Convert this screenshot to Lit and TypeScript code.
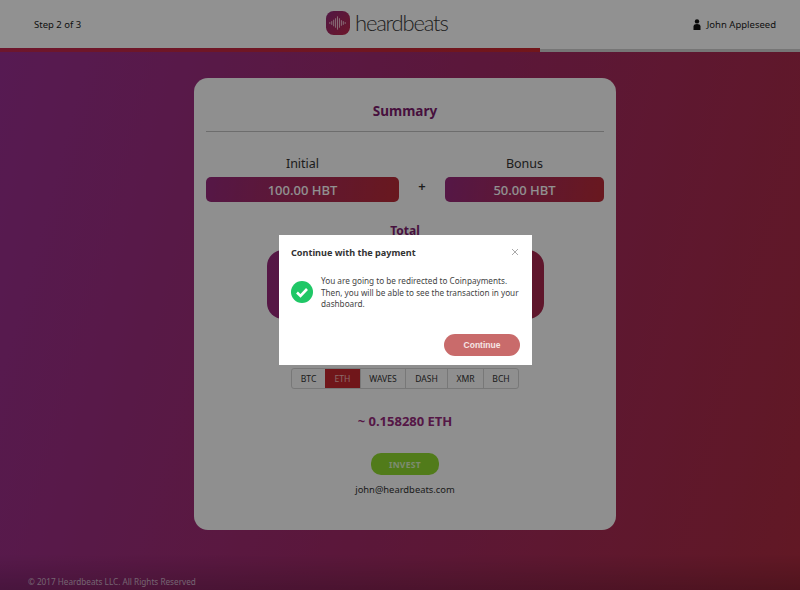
import { LitElement, html, css } from "lit";
import { customElement } from "lit/decorators.js";

const COINS = [
  { name: "BTC", w: 33 },
  { name: "ETH", w: 35 },
  { name: "WAVES", w: 45 },
  { name: "DASH", w: 42 },
  { name: "XMR", w: 36 },
  { name: "BCH", w: 35 },
];

@customElement("app-root")
export class AppRoot extends LitElement {
  static styles = css`
    :host {
      display: block;
      width: 800px;
      height: 590px;
      overflow: hidden;
      position: relative;
      font-family: "Noto Sans", "Open Sans", sans-serif;
      color: #222;
    }
    .page {
      height: 590px;
      display: flex;
      flex-direction: column;
      background: linear-gradient(105deg, #982f92 0%, #a02a68 50%, #ac2b40 100%);
    }
    .top {
      height: 48px;
      flex: none;
      background: #fff;
      display: flex;
      align-items: center;
      padding: 0 24px 0 34px;
      font-size: 9.5px;
    }
    .step { width: 292px; flex: none; }
    .logo { display: flex; align-items: center; gap: 5px; margin-top: -2px; }
    .logo-text { font-size: 22px; letter-spacing: -1.2px; color: #3a3a3a; font-family: "Lato", sans-serif; font-weight: 300; line-height: 24px; }
    .user { display: flex; align-items: center; gap: 6px; margin-left: auto; }
    .progress { height: 4px; flex: none; display: flex; background: #fff; }
    .progress i { display: block; height: 4px; width: 540px; background: linear-gradient(90deg, #c0284f, #c8282f); }
    .progress b { display: block; height: 3px; flex: 1; margin-top: 1px; background: #d0d0d0; }
    .main { flex: 1; display: flex; flex-direction: column; padding-top: 26px; }
    .card {
      margin-left: 194px;
      width: 422px;
      height: 452px;
      box-sizing: border-box;
      background: #fbfbfb;
      border-radius: 14px;
      padding: 23px 12px 0;
      display: flex;
      flex-direction: column;
      align-items: center;
    }
    .title { font-size: 13.5px; line-height: 20px; font-weight: 700; color: #7e1d6e; }
    .rule { align-self: stretch; height: 1px; background: #c0c0c0; margin-top: 10px; }
    .amounts { align-self: stretch; display: grid; grid-template-columns: 193px 46px 159px; margin-top: 23px; }
    .col { display: flex; flex-direction: column; align-items: center; }
    .col span { font-size: 12.5px; line-height: 18px; margin-bottom: 4px; color: #333; }
    .pill {
      align-self: stretch;
      height: 25px;
      border-radius: 5px;
      display: flex;
      align-items: center;
      justify-content: center;
      color: #fff;
      font-size: 13px;
      font-weight: 500;
      background: linear-gradient(100deg, #962a7c, #b92b36);
    }
    .plus { text-align: center; padding-top: 22px; font-size: 13px; line-height: 18px; font-weight: 600; color: #333; }
    .total-label { font-size: 12px; line-height: 16px; font-weight: 700; color: #7e1d6e; margin-top: 21px; }
    .total { width: 277px; height: 69px; margin-top: 11px; border-radius: 16px; background: linear-gradient(100deg, #962a7c, #a8284c); }
    .coins { display: flex; margin-top: 49px; height: 21px; border: 1px solid #d4d4d4; border-radius: 3px; box-sizing: border-box; }
    .coin { display: flex; align-items: center; justify-content: center; box-sizing: border-box; font-size: 8.6px; color: #333; border-left: 1px solid #d4d4d4; }
    .coin:first-child { border-left: 0; }
    .coin.on { background: #c5282f; color: #f3b9b9; border-left: 0; }
    .eth { margin-top: 23px; font-size: 13px; line-height: 18px; font-weight: 700; color: #962a7c; }
    .invest { margin-top: 23px; width: 68px; height: 22px; border-radius: 10px; background: #8fd82f; color: #dcf5c4; font-size: 8.5px; font-weight: 700; display: flex; align-items: center; justify-content: center; letter-spacing: .3px; }
    .mail { margin-top: 7px; font-size: 9.4px; line-height: 16px; color: #333; }
    .foot {
      margin-top: auto;
      height: 36px;
      box-sizing: border-box;
      padding: 22px 0 0 28px;
      font-size: 8.2px;
      line-height: 12px;
      color: #cdb0c6;
      background: linear-gradient(180deg, rgba(0, 0, 0, 0), rgba(0, 0, 0, 0.18));
    }
    .shade { position: absolute; inset: 0; background: rgba(0, 0, 0, 0.43); }
    .modal {
      position: absolute;
      left: 279px;
      top: 235px;
      width: 253px;
      height: 130px;
      background: #fff;
      box-sizing: border-box;
      padding: 10px 12px 0 12px;
      display: flex;
      flex-direction: column;
    }
    .m-head { display: flex; justify-content: space-between; align-items: flex-start; }
    .m-title { font-size: 9.1px; line-height: 15px; font-weight: 700; color: #333; }
    .close { margin: 3px 1px 0 0; }
    .m-body { display: flex; align-items: center; gap: 8px; margin-top: 15px; }
    .m-body p { margin: 0; font-size: 8.2px; line-height: 11.5px; color: #444; width: 200px; flex: none; }
    .m-foot { display: flex; justify-content: flex-end; margin-top: auto; padding-bottom: 9px; }
    .go { width: 76px; height: 22px; border-radius: 11px; background: #c96b6b; color: #f6e6e6; font-size: 8.5px; font-weight: 700; display: flex; align-items: center; justify-content: center; font-family: "Liberation Sans", sans-serif; }
    svg { display: block; flex: none; }
  `;

  render() {
    return html`
      <div class="page">
        <div class="top">
          <div class="step">Step 2 of 3</div>
          <div class="logo">
            <svg width="24" height="24" viewBox="0 0 25 25">
              <defs><linearGradient id="lg" x1="0" y1="0" x2="1" y2="1"><stop offset="0" stop-color="#8e2a78"/><stop offset="1" stop-color="#c0284a"/></linearGradient></defs>
              <rect width="25" height="25" rx="8" fill="url(#lg)"/>
              <path d="M4 12v1M6 11v3M8 9.5v6M10 8v9M12 6v13M14 8v9M16 10v5M18 11v3M20 12v1" stroke="#f4c9d6" stroke-width="1" stroke-linecap="round"/>
            </svg>
            <span class="logo-text">heardbeats</span>
          </div>
          <div class="user">
            <svg width="8" height="11" viewBox="0 0 8 11"><circle cx="4" cy="2.4" r="2.2" fill="#111"/><path d="M0.5 11V7.5C0.5 5.8 2 5 4 5s3.5.8 3.5 2.5V11z" fill="#111"/></svg>
            <span>John Appleseed</span>
          </div>
        </div>
        <div class="progress"><i></i><b></b></div>
        <div class="main">
          <div class="card">
            <div class="title">Summary</div>
            <div class="rule"></div>
            <div class="amounts">
              <div class="col"><span>Initial</span><div class="pill">100.00 HBT</div></div>
              <div class="plus">+</div>
              <div class="col"><span>Bonus</span><div class="pill">50.00 HBT</div></div>
            </div>
            <div class="total-label">Total</div>
            <div class="total"></div>
            <div class="coins">
              ${COINS.map((c) => html`<div class="coin ${c.name === "ETH" ? "on" : ""}" style="width:${c.w}px">${c.name}</div>`)}
            </div>
            <div class="eth">~ 0.158280 ETH</div>
            <div class="invest">INVEST</div>
            <div class="mail">john@heardbeats.com</div>
          </div>
          <div class="foot">© 2017 Heardbeats LLC. All Rights Reserved</div>
        </div>
      </div>
      <div class="shade"></div>
      <div class="modal">
        <div class="m-head">
          <div class="m-title">Continue with the payment</div>
          <svg class="close" width="8" height="8" viewBox="0 0 8 8"><path d="M1 1l6 6M7 1L1 7" stroke="#aaa" stroke-width="1"/></svg>
        </div>
        <div class="m-body">
          <svg width="22" height="22" viewBox="0 0 22 22"><circle cx="11" cy="11" r="11" fill="#1fc766"/><path d="M6 11.5l3.5 3.5L16 8" fill="none" stroke="#fff" stroke-width="2.6"/></svg>
          <p>You are going to be redirected to Coinpayments. Then, you will be able to see the transaction in your dashboard.</p>
        </div>
        <div class="m-foot"><div class="go">Continue</div></div>
      </div>
    `;
  }
}
